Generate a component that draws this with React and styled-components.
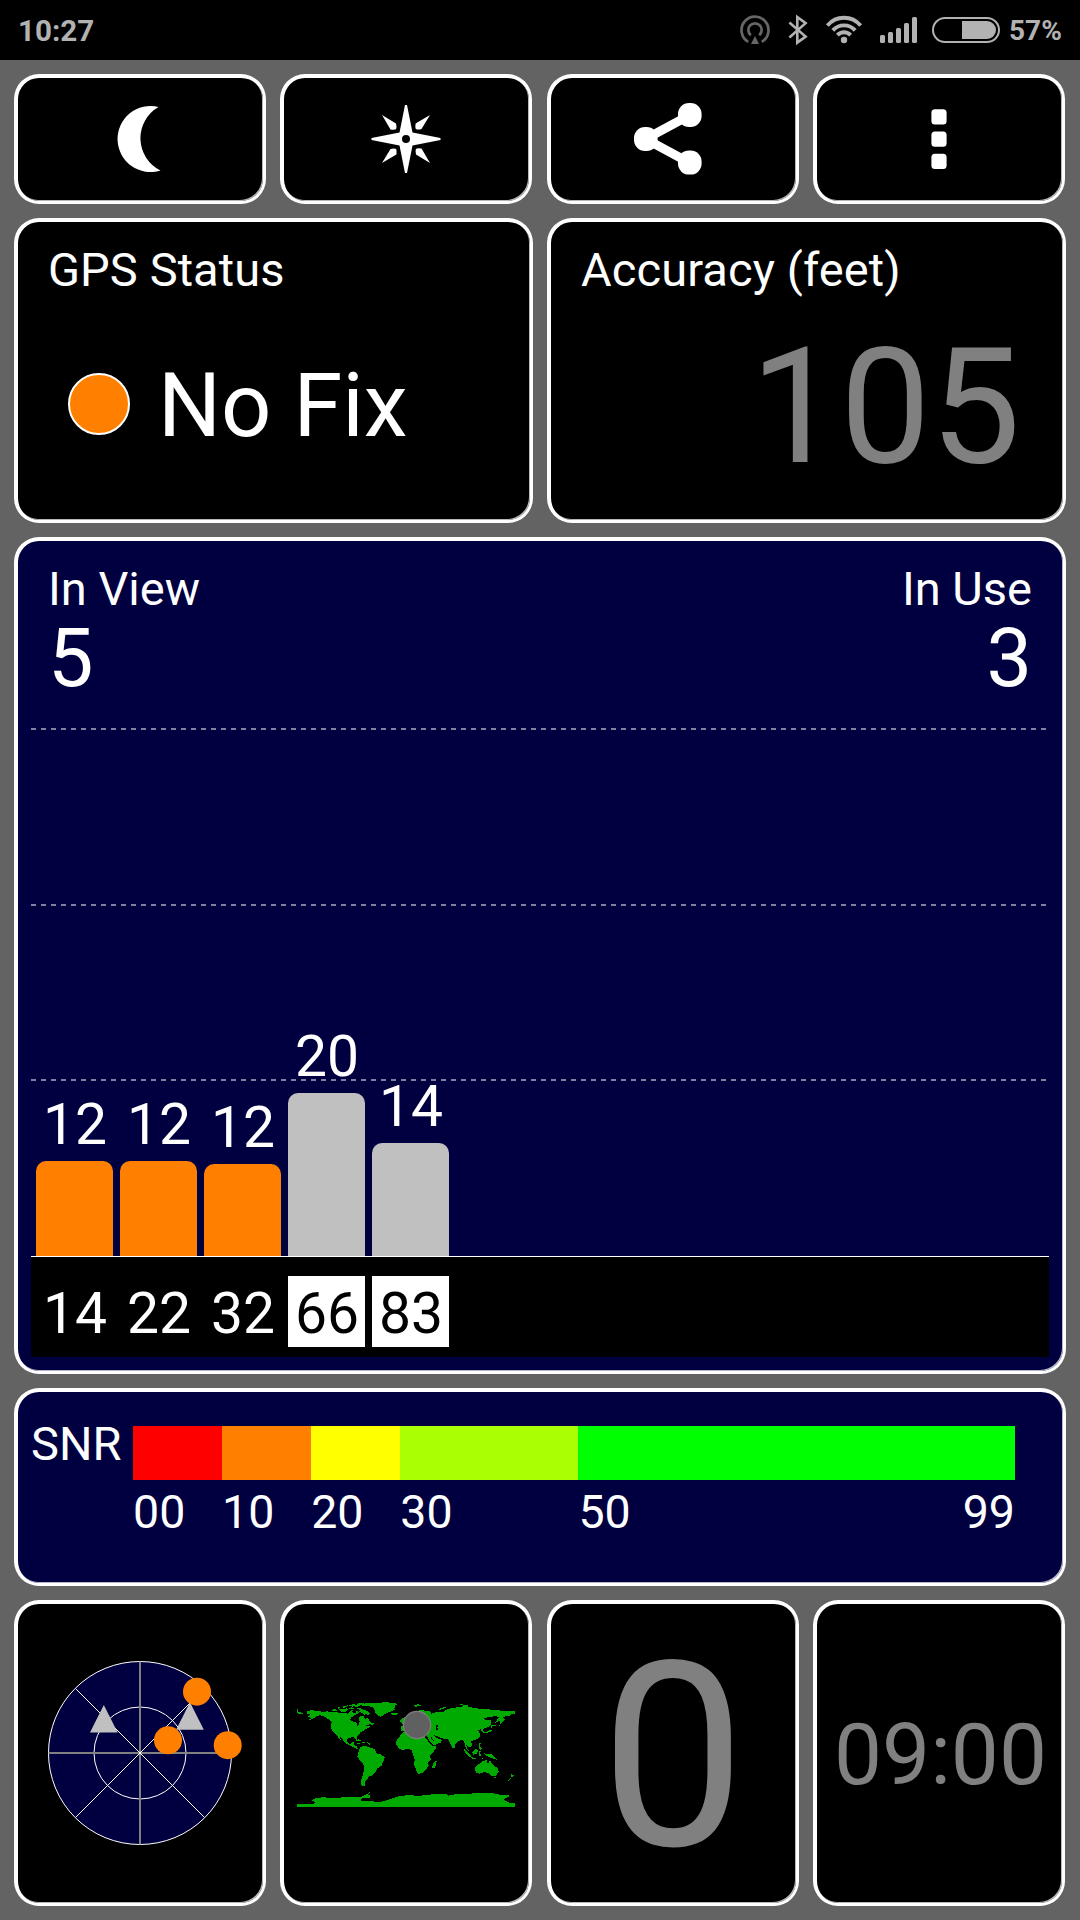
import React from 'react'
import styled, { createGlobalStyle } from 'styled-components'

const NAVY = '#000040'
const ORANGE = '#ff8000'
const SILVER = '#c0c0c0'
const GRAY = '#808080'

const GlobalStyle = createGlobalStyle`
  * {
    box-sizing: border-box;
  }
  body {
    margin: 0;
    background: #636363;
    color: #fff;
    font-family: Roboto, sans-serif;
  }
  svg {
    display: block;
    flex: none;
  }
`

const Screen = styled.div`
  width: 1080px;
  height: 1920px;
  display: flex;
  flex-direction: column;
  overflow: hidden;
`

const StatusBar = styled.header`
  height: 60px;
  flex: none;
  display: flex;
  align-items: center;
  justify-content: space-between;
  padding: 0 18px;
  background: #000;
  color: #b2b2b2;
  font-weight: 700;
`

const Clock = styled.div`
  padding-top: 2px;
  font-size: 29.6px;
  line-height: 60px;
`

const StatusIcons = styled.div`
  display: flex;
  align-items: center;
  gap: 18px;
`

const BatteryIcon = styled.svg`
  margin-left: -3px;
`

const BatteryText = styled.div`
  width: 53px;
  margin-left: -9px;
  font-size: 28px;
  line-height: 61px;
  white-space: nowrap;
`

const Board = styled.main`
  display: grid;
  grid-template-columns: 252px 253px 252px 253px;
  grid-template-rows: 130px 305px 837px 198px 306px;
  gap: 14px;
  padding: 14px;
`

const Panel = styled.section`
  grid-column: span ${props => props.$span || 1};
  display: flex;
  flex-direction: column;
  min-width: 0;
  border: solid #fff;
  border-width: 4px 3px 3px 4px;
  border-radius: 25px;
  box-shadow: inset -1px -1px 0 rgba(255, 255, 255, 0.72);
  background: ${props => props.$bg || '#000'};
`

const Tile = styled(Panel)`
  width: 252px;
  align-items: center;
  justify-content: center;
  padding: 0 1px 1px 0;
`

const ToolButton = styled(Tile).attrs({ as: 'button' })`
  color: #fff;
`

const Title = styled.div`
  font-size: 47px;
  line-height: 48px;
  white-space: nowrap;
`

const InfoPanel = styled(Panel)`
  padding: 24px 41px 0 30px;

  ${Title} {
    letter-spacing: 0.1px;
  }
`

const FixRow = styled.div`
  display: flex;
  align-items: center;
  margin-top: 68px;
  padding-left: 20px;
`

const FixLight = styled.div`
  width: 62px;
  height: 62px;
  margin: 0 28px 4px 0;
  border: 2px solid #fff;
  border-radius: 50%;
  background: ${ORANGE};
`

const FixText = styled.div`
  font-size: 88.4px;
  line-height: 88px;
`

const AccuracyValue = styled.div`
  margin-top: 32px;
  padding-right: 2px;
  font-size: 161.4px;
  line-height: 162px;
  letter-spacing: -0.7px;
  text-align: right;
  color: ${GRAY};
`

const Counts = styled.div`
  display: flex;
  justify-content: space-between;
  height: 187px;
  padding: 24px 31px 0 30px;
`

const Count = styled.div`
  text-align: ${props => props.$align || 'left'};
`

const CountValue = styled.div`
  margin-top: 5px;
  font-size: 81px;
  line-height: 82px;
`

const dashes = 'repeating-linear-gradient(90deg, rgba(255, 255, 255, 0.5) 0 5px, transparent 5px 10px)'

const Plot = styled.div`
  display: flex;
  align-items: flex-end;
  gap: 7px;
  height: 529px;
  margin: 0 14px 0 13px;
  padding-left: 5px;
  border-bottom: 1px solid #fff;
  background-image: ${dashes}, ${dashes}, ${dashes};
  background-size: 100% 2px;
  background-position: 0 0, 0 176px, 0 351px;
  background-repeat: no-repeat;
`

const BarColumn = styled.div`
  width: 77px;
  font-size: 57px;
  line-height: 57px;
  text-align: center;
  text-indent: 1px;
`

const Bar = styled.div`
  margin-top: 8px;
  border-radius: 10px 10px 0 0;
  background: ${props => props.$color};
`

const IdRow = styled.div`
  display: flex;
  gap: 7px;
  height: 100px;
  margin: 0 14px 0 13px;
  padding: 19px 0 0 5px;
  background: #000;
`

const SatelliteId = styled.div`
  width: 77px;
  height: 71px;
  font-size: 57px;
  line-height: 76px;
  text-align: center;
  text-indent: 1px;
  color: ${props => (props.$inverted ? '#000' : '#fff')};
  background: ${props => (props.$inverted ? '#fff' : 'transparent')};
`

const Legend = styled.div`
  display: flex;
  padding: 28px 0 0 13px;
`

const LegendTitle = styled(Title)`
  width: 102px;
`

const Scale = styled.div`
  display: flex;
  width: 882px;
  margin-top: 6px;
`

const Step = styled.div`
  flex: ${props => props.$size} 1 0;
  min-width: 0;
`

const StepBand = styled.div`
  height: 54px;
  background: ${props => props.$color};
`

const StepLabels = styled.div`
  display: flex;
  justify-content: space-between;
  margin-top: 8px;
  font-size: 46.5px;
  line-height: 48px;
`

const Speed = styled.div`
  padding-top: 7px;
  font-size: 258px;
  line-height: 260px;
  color: ${GRAY};
`

const LocalTime = styled.div`
  padding: 4px 0 0 3px;
  font-size: 85.5px;
  line-height: 85px;
  color: ${GRAY};
`

const satellites = [
  { id: 14, snr: 12, height: 95, used: true },
  { id: 22, snr: 12, height: 95, used: true },
  { id: 32, snr: 12, height: 92, used: true },
  { id: 66, snr: 20, height: 163, used: false },
  { id: 83, snr: 14, height: 113, used: false },
]

const steps = [
  { size: 10, color: '#ff0000', labels: ['00'] },
  { size: 10, color: '#ff8000', labels: ['10'] },
  { size: 10, color: '#ffff00', labels: ['20'] },
  { size: 20, color: '#aaff00', labels: ['30'] },
  { size: 49, color: '#00ff00', labels: ['50', '99'] },
]

function StatusBarIcons() {
  return (
    <StatusIcons>
      {/* hotspot */}
      <svg width="30" height="60" viewBox="0 0 30 60" fill="none" stroke="#666" strokeWidth="2.7">
        <path d="M8.2 41.8A13.5 13.5 0 1 1 21.8 41.8" />
        <path d="M10.8 35.2A6.7 6.7 0 1 1 19.2 35.2" />
        <path d="M15 36L19 44H11Z" fill="#666" stroke="none" />
      </svg>
      {/* bluetooth */}
      <svg width="20" height="60" viewBox="0 0 20 60" fill="none" stroke="#b2b2b2" strokeWidth="2.6">
        <path d="M1.4 22.5L17.6 36.6L9.3 42.6V17L17.6 23.2L1.4 37.4" />
      </svg>
      {/* wifi */}
      <svg width="36" height="60" viewBox="0 0 36 60" fill="none" stroke="#b2b2b2" strokeWidth="3.9">
        <path d="M1.4 25.6A21.6 21.6 0 0 1 34.6 25.6" />
        <path d="M6.8 30.4A15 15 0 0 1 29.2 30.4" />
        <path d="M11.4 35.2A9 9 0 0 1 24.6 35.2" />
        <circle cx="18" cy="40" r="3.2" fill="#b2b2b2" stroke="none" />
      </svg>
      {/* mobile signal */}
      <svg width="37" height="60" viewBox="0 0 37 60" fill="#b2b2b2">
        <rect x="0" y="35" width="5" height="8" rx="1.5" />
        <rect x="8" y="32" width="5" height="11" rx="1.5" />
        <rect x="16" y="28" width="5" height="15" rx="1.5" />
        <rect x="24" y="23" width="5" height="20" rx="1.5" />
        <rect x="32" y="17" width="5" height="26" rx="1.5" />
      </svg>
      <BatteryIcon width="68" height="60" viewBox="0 0 68 60">
        <rect x="1" y="18" width="66" height="24" rx="12" fill="none" stroke="#b2b2b2" strokeWidth="2" />
        <path d="M30 21H55A9 9 0 0 1 55 39H30Z" fill="#b2b2b2" />
      </BatteryIcon>
      <BatteryText>57%</BatteryText>
    </StatusIcons>
  )
}

function MoonIcon() {
  return (
    <svg width="76" height="76" viewBox="-38 -38 76 76" fill="#fff">
      <path d="M18.5 -32A33 33 0 1 0 20.5 31.5A36 36 0 0 1 18.5 -32Z" />
    </svg>
  )
}

function CompassIcon() {
  const ray = 'M-24 -24L-10 -15.5Q-9 -12 -10 -9.8Q-12 -9 -15.5 -9.6Z'
  return (
    <svg width="76" height="76" viewBox="-38 -38 76 76" fill="#fff">
      <path d="M-1 -34H1L6.5 -6.5L34.5 -1V1L6.5 6.5L1 34H-1L-6.5 6.5L-34.5 1V-1L-6.5 -6.5Z" />
      {[0, 90, 180, 270].map(angle => (
        <path key={angle} d={ray} transform={`rotate(${angle})`} />
      ))}
      <circle r="4" fill="#000" />
    </svg>
  )
}

function ShareIcon() {
  return (
    <svg width="80" height="76" viewBox="-40 -38 80 76" fill="#fff">
      <path d="M17 -24L-27.5 0L17 24" fill="none" stroke="#fff" strokeWidth="9" />
      <rect x="-39" y="-12" width="23.6" height="24" rx="11" />
      <rect x="5" y="-36" width="23.6" height="24" rx="11" />
      <rect x="5" y="11.6" width="23.6" height="24" rx="11" />
    </svg>
  )
}

function MenuIcon() {
  return (
    <svg width="16" height="60" viewBox="0 0 16 60" fill="#fff">
      <rect x="0.4" y="0.3" width="15.2" height="15.2" rx="3.5" />
      <rect x="0.4" y="22.5" width="15.2" height="15.2" rx="3.5" />
      <rect x="0.4" y="44.7" width="15.2" height="15.2" rx="3.5" />
    </svg>
  )
}

function SkyView() {
  return (
    <svg width="210" height="200" viewBox="-105 -100 210 200">
      <g fill="none" stroke="#fff">
        <circle r="91.5" fill={NAVY} />
        <circle r="46" />
        <path d="M0 -91.5V91.5M-91.5 0H91.5" stroke={GRAY} strokeWidth="2" />
        <path d="M-64.5 -64.5L64.5 64.5M64.5 -64.5L-64.5 64.5" />
      </g>
      <g fill={SILVER}>
        <path d="M-36.2 -48L-22.3 -20.5H-50Z" />
        <path d="M50 -50.7L63.8 -23.2H36.1Z" />
      </g>
      <g fill={ORANGE}>
        <circle cx="57" cy="-61.3" r="14" />
        <circle cx="28" cy="-12.7" r="14" />
        <circle cx="87.7" cy="-7.8" r="14" />
      </g>
    </svg>
  )
}

// equirectangular outlines, 3 units per pixel
const land = [
  // North America
  'M80 95L95 90L108 93L118 93L130 96L142 94L150 97L165 95L178 99L192 99L205 101L210 94L215 93L220 100L228 97L231 92L236 98L228 104L222 107L214 112L210 120L222 126L230 128L232 137L237 133L239 124L236 117L240 107L250 108L255 117L262 112L268 122L274 130L268 133L258 137L270 138L268 144L258 146L250 152L241 157L238 163L230 170L231 180L226 176L220 172L208 173L202 177L202 186L208 192L215 190L220 184L222 192L224 196L232 198L232 205L238 207L232 208L222 202L210 197L195 189L188 178L180 170L182 180L186 186L178 177L173 168L163 158L155 150L152 138L155 128L145 117L132 110L120 106L108 110L98 117L82 122L95 114L82 110L90 104L80 100Z',
  'M51 87H54V95L62 97L70 99L68 102L51 100Z',
  'M155 90L166 87L172 91L160 94ZM166 84L180 81L176 86ZM176 88L192 87L202 90L198 96L184 95ZM186 80L204 76L200 81L190 84ZM206 84L214 82L222 86L212 88ZM204 77L222 72L232 76L218 80ZM222 78L236 70L252 69L248 74L236 78L230 82ZM212 90L220 89L216 94ZM198 84L206 88L200 90Z',
  'M228 86L242 84L250 89L262 93L270 101L264 106L258 101L254 107L248 100L238 96L240 90ZM270 126L281 130L278 136L270 132Z',
  'M224 180L236 178L246 184L234 183ZM248 184L256 188L246 190ZM230 190L238 189L240 193ZM260 186L270 190L268 195Z',
  // Greenland and Iceland
  'M240 74L262 69L290 70L318 66L330 68L345 69L354 73L345 76L343 85L346 89L332 95L318 100L308 107L302 111L292 106L286 98L283 88L275 80L262 79L250 78Z',
  'M333 100L345 98L354 101L348 105L336 104Z',
  // South America
  'M240 203L250 198L265 200L275 204L284 208L290 220L304 224L315 232L310 243L304 258L292 265L287 277L276 288L266 290L262 298L256 303L254 312L257 318L248 318L242 315L244 300L249 285L252 268L250 252L240 242L232 230L236 215Z',
  // Africa
  'M370 157L360 168L350 180L348 192L356 205L366 210L385 207L395 210L400 225L404 240L401 252L408 268L413 281L428 280L438 268L446 258L444 248L452 238L450 226L462 214L470 200L456 198L448 190L440 176L430 168L415 168L405 165L398 158Z',
  'M464 245L470 242L468 254L463 265L457 264L458 252Z',
  // Eurasia
  'M362 153L363 140L372 137L360 126L362 118L372 112L398 100L420 90L436 92L452 95L454 101L462 98L470 96L490 95L498 90L515 83L540 82L548 78L568 80L580 84L600 86L625 88L650 90L680 94L704 92V102L692 103L690 108L676 108L668 114L660 122L646 128L656 112L646 108L630 112L612 113L616 120L632 120L634 132L624 142L612 145L609 150L614 158L608 158L602 148L594 150L600 160L600 170L592 177L580 181L572 184L578 196L570 203L562 198L556 190L562 206L568 214L558 206L552 184L545 180L535 184L526 194L524 205L518 204L510 188L504 178L492 176L480 173L470 168L462 165L468 174L486 180L482 188L460 196L452 188L443 172L440 165L430 160L400 150L385 140L375 148L370 155Z',
  'M400 76L412 73L426 75L418 79L406 80ZM474 88L486 83L500 80L494 85L480 90ZM540 73L556 74L570 79L556 80Z',
  // Japan
  'M660 117L672 112L674 120L664 130L658 138L660 126ZM634 146L638 138L652 136L650 134L634 136L632 144ZM612 158L624 153L634 148L636 154L624 158L614 160Z',
  // Indonesia and the Philippines
  'M551 205L560 212L568 222L576 232L566 230L556 218ZM572 232L584 233L590 236L578 237ZM576 216L588 207L594 212L590 222L580 224ZM596 214L606 212L600 218L604 226L598 228ZM596 187L602 190L600 200L606 206L600 210L596 198ZM612 220L624 222L638 224L644 232L652 240L640 236L628 232L618 226ZM604 234L612 234L606 238Z',
  // Australia and New Zealand
  'M585 262L592 256L600 250L606 244L612 244L616 240L622 240L620 248L627 250L630 238L636 252L644 258L654 265L656 275L650 284L642 290L632 286L624 278L610 277L598 281L588 278L585 270Z',
  'M642 292H648L645 297ZM694 282L701 286L700 292L692 292ZM682 302L690 296L694 293L690 301Z',
  // Antarctica
  'M51 373L102 372L106 366L98 362L84 360L104 358L108 354L130 352L165 354L200 351L238 352L250 348L262 342L272 333L264 344L270 346L270 353L250 354L240 360L250 364L272 362L290 367L310 364L335 356L360 348L380 346L420 347L450 344L475 341L500 341L505 347L530 342L570 341L600 338L640 340L660 344L686 346L686 352L675 353L672 360L690 369L704 370V381H51Z',
]

function WorldMap() {
  return (
    <svg width="218" height="110" viewBox="51 54 654 330">
      <g fill="#00aa00" shapeRendering="crispEdges">
        {land.map((d, i) => (
          <path key={i} d={d} />
        ))}
      </g>
      <g fill="#000" shapeRendering="crispEdges">
        <path d="M467 134L474 137L472 144L475 152L469 150Z" />
        <path d="M452 168L464 186L456 180Z" />
      </g>
      <circle cx="411" cy="135" r="41" fill="#606060" stroke={GRAY} strokeWidth="3.5" />
    </svg>
  )
}

export default function App() {
  return (
    <Screen>
      <GlobalStyle />
      <StatusBar>
        <Clock>10:27</Clock>
        <StatusBarIcons />
      </StatusBar>
      <Board>
        <ToolButton aria-label="Night mode"><MoonIcon /></ToolButton>
        <ToolButton aria-label="Compass"><CompassIcon /></ToolButton>
        <ToolButton aria-label="Share"><ShareIcon /></ToolButton>
        <ToolButton aria-label="Menu"><MenuIcon /></ToolButton>

        <InfoPanel $span={2}>
          <Title>GPS Status</Title>
          <FixRow>
            <FixLight />
            <FixText>No Fix</FixText>
          </FixRow>
        </InfoPanel>
        <InfoPanel $span={2}>
          <Title>Accuracy (feet)</Title>
          <AccuracyValue>105</AccuracyValue>
        </InfoPanel>

        <Panel $span={4} $bg={NAVY}>
          <Counts>
            <Count>
              <Title>In View</Title>
              <CountValue>5</CountValue>
            </Count>
            <Count $align="right">
              <Title>In Use</Title>
              <CountValue>3</CountValue>
            </Count>
          </Counts>
          <Plot>
            {satellites.map(sat => (
              <BarColumn key={sat.id}>
                {sat.snr}
                <Bar $color={sat.used ? ORANGE : SILVER} style={{ height: sat.height }} />
              </BarColumn>
            ))}
          </Plot>
          <IdRow>
            {satellites.map(sat => (
              <SatelliteId key={sat.id} $inverted={!sat.used}>{sat.id}</SatelliteId>
            ))}
          </IdRow>
        </Panel>

        <Panel $span={4} $bg={NAVY}>
          <Legend>
            <LegendTitle>SNR</LegendTitle>
            <Scale>
              {steps.map(step => (
                <Step key={step.color} $size={step.size}>
                  <StepBand $color={step.color} />
                  <StepLabels>
                    {step.labels.map(label => (
                      <span key={label}>{label}</span>
                    ))}
                  </StepLabels>
                </Step>
              ))}
            </Scale>
          </Legend>
        </Panel>

        <Tile><SkyView /></Tile>
        <Tile><WorldMap /></Tile>
        <Tile><Speed>0</Speed></Tile>
        <Tile><LocalTime>09:00</LocalTime></Tile>
      </Board>
    </Screen>
  )
}
